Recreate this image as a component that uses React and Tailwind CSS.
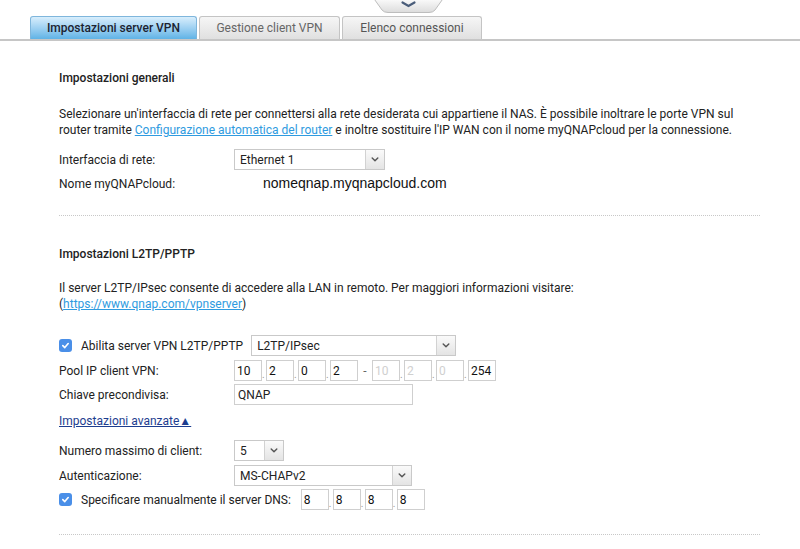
import React from 'react';

const Chevron = ({ className = '' }) => (
  <svg viewBox="0 0 10 6" className={className} fill="none" stroke="currentColor" strokeWidth="1.8" strokeLinecap="round" strokeLinejoin="round">
    <path d="M1.5 1.2 L5 4.6 L8.5 1.2" />
  </svg>
);

const Select = ({ value, width }) => (
  <div className={`flex h-[21px] ${width} border border-[#c9c9c9] bg-white`}>
    <div className="flex-1 flex items-center pl-[5px] text-[12px] text-[#222]">{value}</div>
    <div className="w-[19px] flex items-center justify-center border-l border-[#d2d2d2] bg-gradient-to-b from-[#fafafa] to-[#e4e4e4] text-[#555]">
      <Chevron className="w-[8px] h-[5px]" />
    </div>
  </div>
);

const Check = () => (
  <div className="w-[13px] h-[13px] rounded-[3px] bg-[#4a8fe8] flex items-center justify-center">
    <svg viewBox="0 0 10 10" className="w-[9px] h-[9px]" fill="none" stroke="white" strokeWidth="1.8" strokeLinecap="round" strokeLinejoin="round">
      <path d="M2 5.2 L4.2 7.3 L8 2.8" />
    </svg>
  </div>
);

const IpBox = ({ value, muted }) => (
  <div className={`h-[21px] w-[28px] border border-[#cfcfcf] bg-white flex items-center pl-[2px] text-[12px] ${muted ? 'text-[#d0d0d0]' : 'text-[#111]'}`}>
    {value}
  </div>
);

const Dot = () => <span className="w-[4px] self-end pb-[1px] text-[10px] leading-none text-[#999]">.</span>;

const Row = ({ label, children, className = '' }) => (
  <div className={`flex items-center h-[21px] ${className}`}>
    <div className="w-[175px] text-[12px] text-[#222]">{label}</div>
    {children}
  </div>
);

const Sep = ({ className = '' }) => (
  <div className={`w-[701px] border-t border-dotted border-[#c8c8c8] ${className}`} />
);

export default function App() {
  return (
    <div className="relative w-[800px] h-[549px] bg-white overflow-hidden font-['Roboto',sans-serif] text-[#222]">
      {/* pull-down handle */}
      <div className="absolute left-[373px] top-[-2px] w-[71px] h-[15px]">
        <svg viewBox="0 0 71 15" className="absolute inset-0 w-full h-full">
          <defs>
            <linearGradient id="hg" x1="0" y1="0" x2="0" y2="1">
              <stop offset="0" stopColor="#fdfdfd" />
              <stop offset="1" stopColor="#dcdcdc" />
            </linearGradient>
          </defs>
          <path d="M0.5 0 L70.5 0 L62 12 Q60 14.5 56 14.5 L15 14.5 Q11 14.5 9 12 Z" fill="url(#hg)" stroke="#bdbdbd" />
          <path d="M29.5 4.5 L35.5 8 L41.5 4.5" fill="none" stroke="#4a5d7a" strokeWidth="2.2" strokeLinecap="round" />
        </svg>
      </div>

      {/* tabs */}
      <div className="flex items-end gap-[2px] pl-[30px] pt-[16px] border-b-2 border-[#c6c6c6]">
        <div className="h-[23px] w-[167px] flex items-center justify-center rounded-t-[3px] border border-b-0 border-[#7fb6dc] bg-gradient-to-b from-[#d8eefc] to-[#5fb3e6] text-[12px] font-medium text-[#1c2330]">
          Impostazioni server VPN
        </div>
        <div className="h-[23px] w-[141px] flex items-center justify-center rounded-t-[3px] border border-b-0 border-[#c4c4c4] bg-gradient-to-b from-[#f6f6f6] to-[#e0e0e0] text-[12px] text-[#666]">
          Gestione client VPN
        </div>
        <div className="h-[23px] w-[140px] flex items-center justify-center rounded-t-[3px] border border-b-0 border-[#c4c4c4] bg-gradient-to-b from-[#f6f6f6] to-[#e0e0e0] text-[12px] text-[#555]">
          Elenco connessioni
        </div>
      </div>

      <div className="pl-[59px]">
        <div className="mt-[30px] h-[14px] text-[12px] font-medium leading-[14px]">Impostazioni generali</div>
        <p className="mt-[21px] text-[12px] leading-[16px] w-[700px]">
          Selezionare un'interfaccia di rete per connettersi alla rete desiderata cui appartiene il NAS. È possibile inoltrare le porte VPN sul router tramite{' '}
          <span className="text-[#2f9be0] underline">Configurazione automatica del router</span> e inoltre sostituire l'IP WAN con il nome myQNAPcloud per la connessione.
        </p>
        <Row label="Interfaccia di rete:" className="mt-[11px]">
          <Select value="Ethernet 1" width="w-[151px]" />
        </Row>
        <Row label="Nome myQNAPcloud:" className="mt-[3px]">
          <span className="ml-[29px] text-[14px] font-['Liberation_Sans',sans-serif] text-[#111]">nomeqnap.myqnapcloud.com</span>
        </Row>
        <Sep className="mt-[21px]" />

        <div className="mt-[31px] h-[14px] text-[12px] font-medium leading-[14px]">Impostazioni L2TP/PPTP</div>
        <p className="mt-[19px] text-[12px] leading-[16px] w-[700px]">
          Il server L2TP/IPsec consente di accedere alla LAN in remoto. Per maggiori informazioni visitare:
          <br />(<span className="text-[#2f9be0] underline">https://www.qnap.com/vpnserver</span>)
        </p>

        <div className="mt-[23px] flex items-center h-[21px]">
          <Check />
          <span className="ml-[9px] text-[12px]">Abilita server VPN L2TP/PPTP</span>
          <div className="ml-[8px]">
            <Select value="L2TP/IPsec" width="w-[205px]" />
          </div>
        </div>
        <Row label="Pool IP client VPN:" className="mt-[4px]">
          <div className="flex items-center">
            <IpBox value="10" /><Dot />
            <IpBox value="2" /><Dot />
            <IpBox value="0" /><Dot />
            <IpBox value="2" />
            <span className="w-[14px] text-center text-[12px] text-[#666]">-</span>
            <IpBox value="10" muted /><Dot />
            <IpBox value="2" muted /><Dot />
            <IpBox value="0" muted /><Dot />
            <IpBox value="254" />
          </div>
        </Row>
        <Row label="Chiave precondivisa:" className="mt-[3px]">
          <div className="h-[21px] w-[179px] border border-[#cfcfcf] flex items-center pl-[3px] text-[12px]">QNAP</div>
        </Row>
        <div className="mt-[8px] h-[16px] flex items-center">
          <span className="text-[12px] text-[#1d3d8f] underline">Impostazioni avanzate▲</span>
        </div>
        <Row label="Numero massimo di client:" className="mt-[11px]">
          <Select value="5" width="w-[50px]" />
        </Row>
        <Row label="Autenticazione:" className="mt-[4px]">
          <Select value="MS-CHAPv2" width="w-[178px]" />
        </Row>
        <div className="mt-[3px] flex items-center h-[21px]">
          <Check />
          <span className="ml-[9px] text-[12px]">Specificare manualmente il server DNS:</span>
          <div className="ml-[10px] flex items-center">
            <IpBox value="8" /><Dot />
            <IpBox value="8" /><Dot />
            <IpBox value="8" /><Dot />
            <IpBox value="8" />
          </div>
        </div>
        <Sep className="mt-[24px]" />
      </div>
    </div>
  );
}
